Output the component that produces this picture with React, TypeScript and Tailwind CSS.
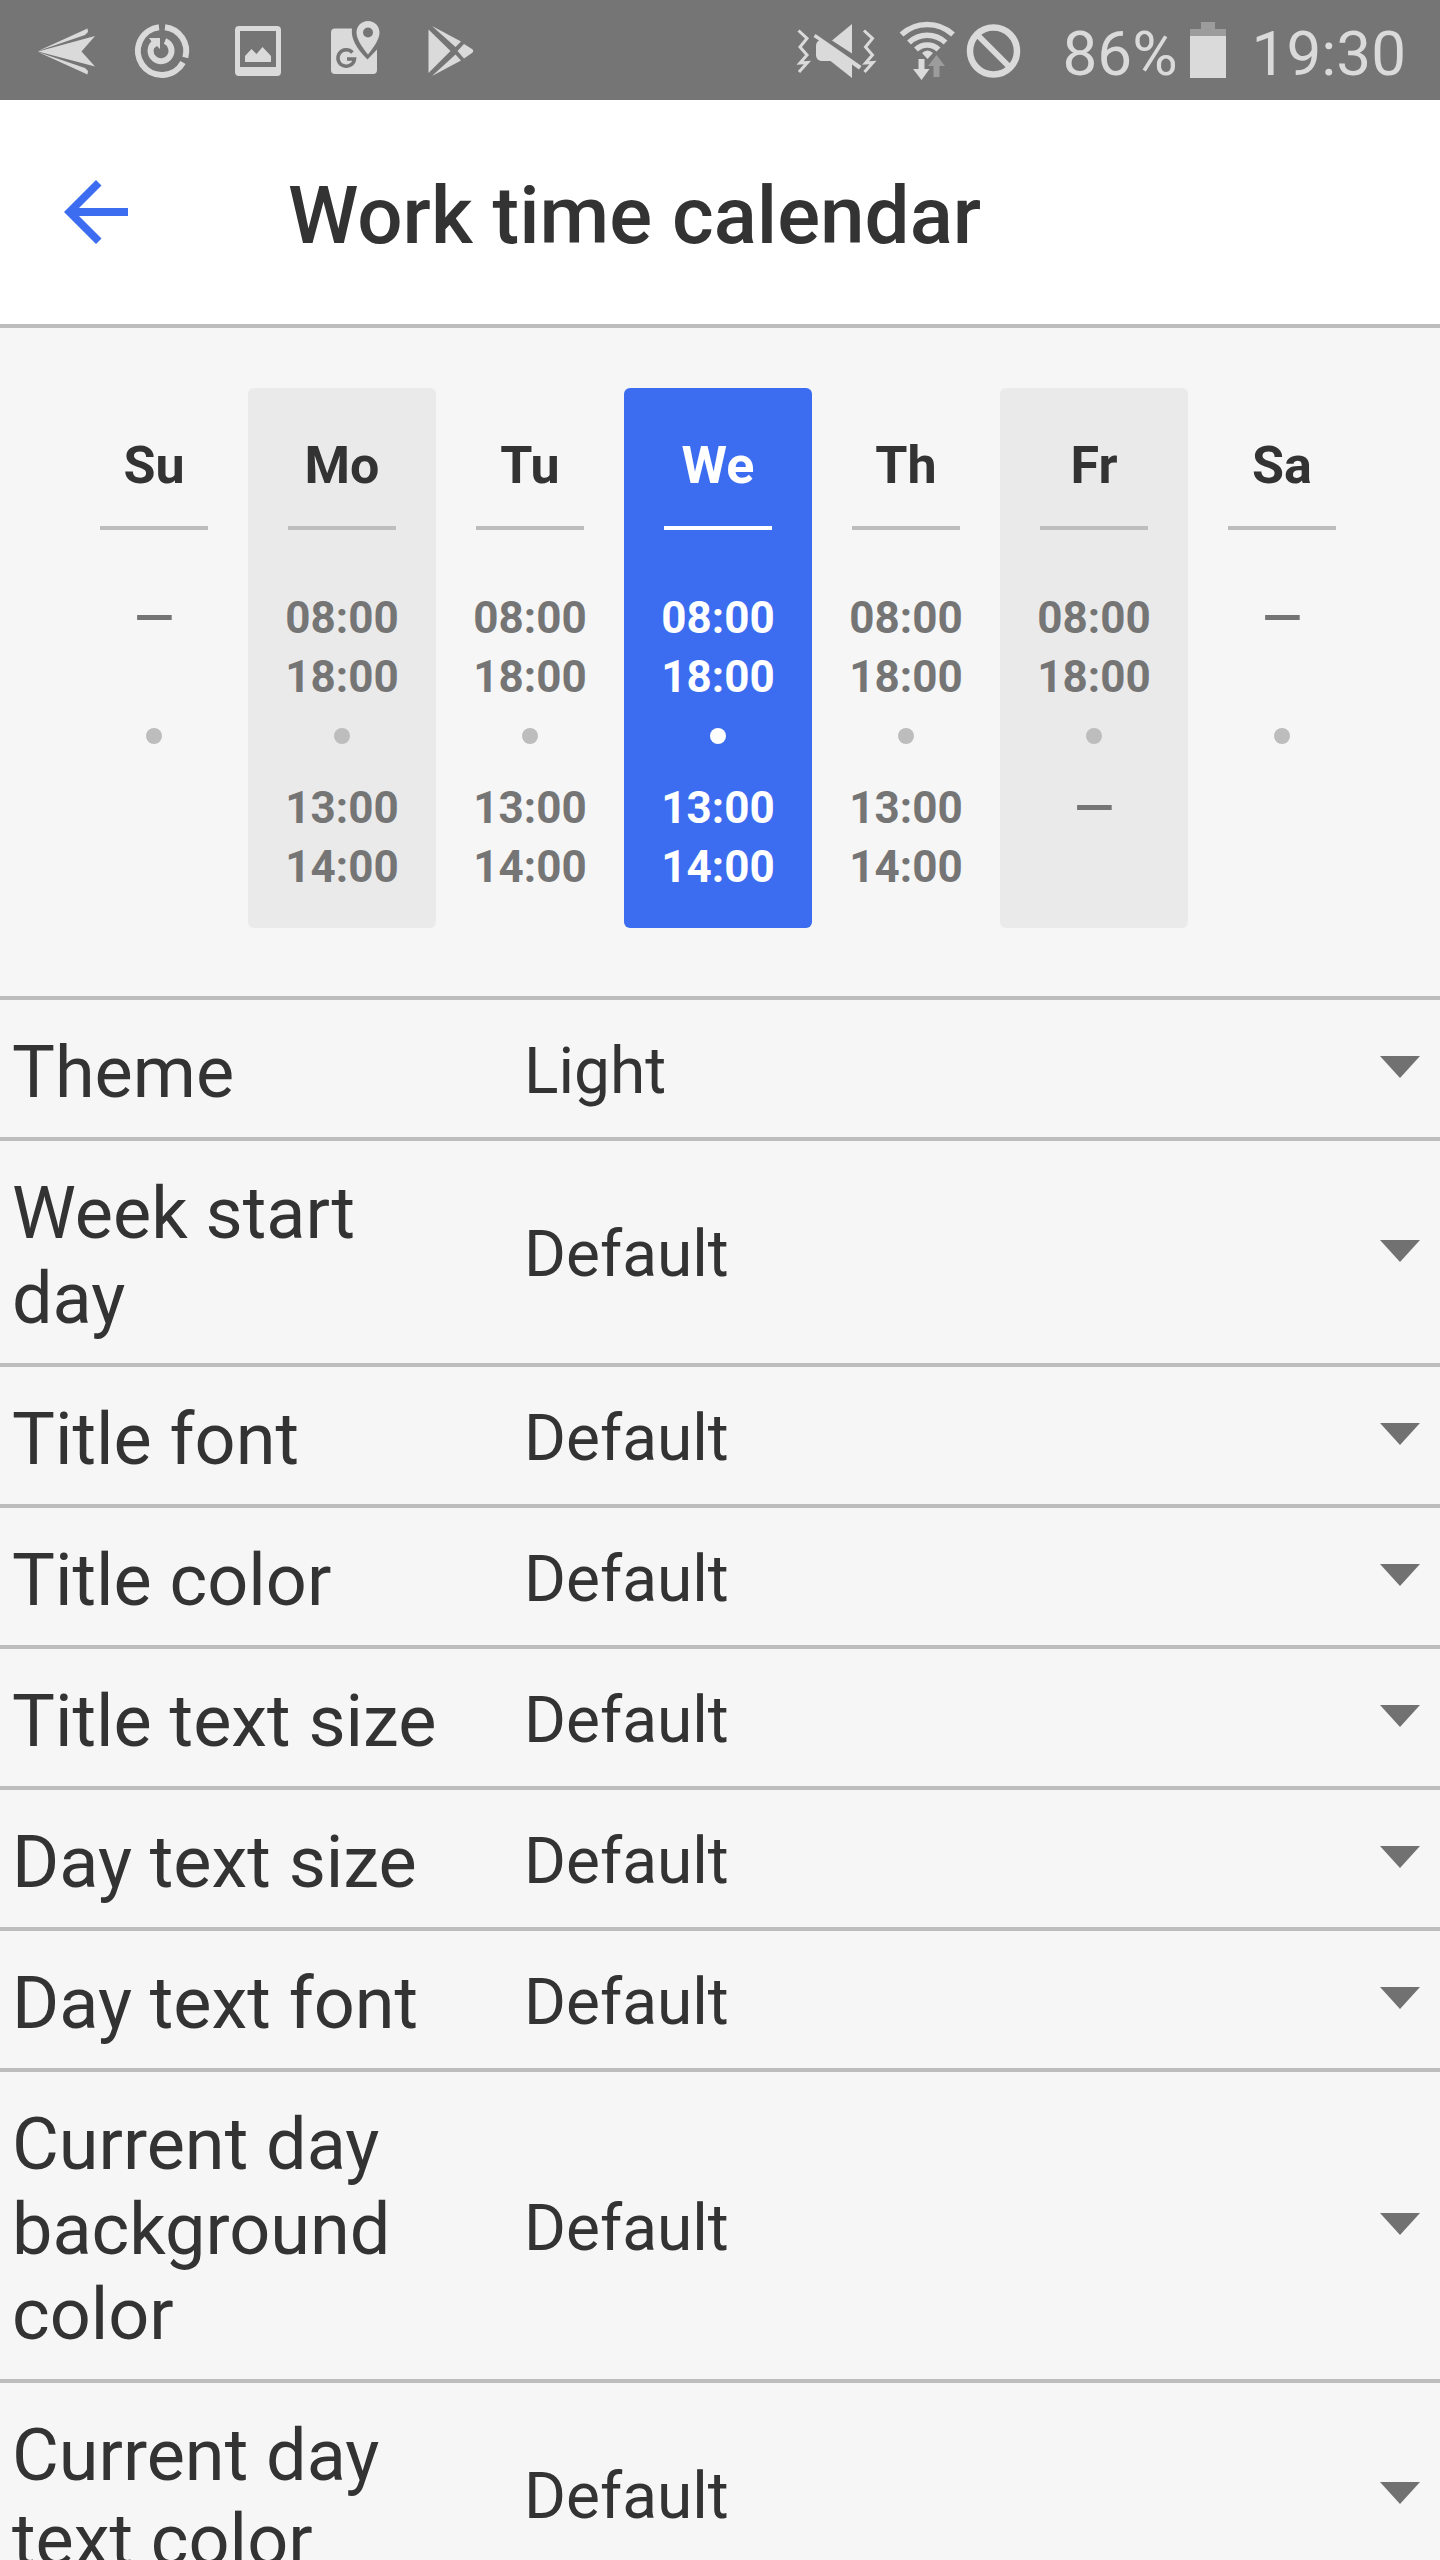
import React from "react";

type Day = { name: string; work: string[]; rest: string[]; tone: "plain" | "shaded" | "current" };

const DASH = ["—"];
const WORK = ["08:00", "18:00"];
const REST = ["13:00", "14:00"];

const days: Day[] = [
  { name: "Su", work: DASH, rest: [], tone: "plain" },
  { name: "Mo", work: WORK, rest: REST, tone: "shaded" },
  { name: "Tu", work: WORK, rest: REST, tone: "plain" },
  { name: "We", work: WORK, rest: REST, tone: "current" },
  { name: "Th", work: WORK, rest: REST, tone: "plain" },
  { name: "Fr", work: WORK, rest: DASH, tone: "shaded" },
  { name: "Sa", work: DASH, rest: [], tone: "plain" },
];

const settings = [
  { id: "theme", label: "Theme", options: ["Light", "Dark"] },
  { id: "week-start", label: "Week start day", options: ["Default", "Sunday", "Monday"] },
  { id: "title-font", label: "Title font", options: ["Default"] },
  { id: "title-color", label: "Title color", options: ["Default"] },
  { id: "title-size", label: "Title text size", options: ["Default"] },
  { id: "day-size", label: "Day text size", options: ["Default"] },
  { id: "day-font", label: "Day text font", options: ["Default"] },
  { id: "current-bg", label: "Current day background color", options: ["Default"] },
  { id: "current-text", label: "Current day text color", options: ["Default"] },
];

const tones = {
  plain: { box: "", name: "text-[#333333]", mark: "bg-[#bdbdbd]", time: "text-[#757575]" },
  shaded: { box: "bg-[#eaeaea]", name: "text-[#333333]", mark: "bg-[#bdbdbd]", time: "text-[#757575]" },
  current: { box: "bg-[#3c6df0]", name: "text-white", mark: "bg-white", time: "text-white" },
};

function NotificationIcons() {
  return (
    <svg width="480" height="100" viewBox="0 0 480 100" fill="#dadada" aria-hidden="true">
      {/* share arrow */}
      <path d="M38 51 87.500 28.500 88 32 85 35Z" />
      <path d="M38 51.500 95 36 81.500 51.500 95 66.500Z" />
      <path d="M38 52 85 68 88 71 87.500 74.500Z" />
      {/* restart */}
      <g fill="none" stroke="#dadada" strokeWidth="6">
        <path d="M159 27.200A24 24 0 1 0 183 62.500" />
        <path d="M165 27.200A24 24 0 0 1 185.300 57.500" />
        <path d="M154.500 42.500A10.500 10.500 0 1 0 165 41" />
      </g>
      <path d="M149 38h11v11l-3-3-4 3-1-7Z" />
      {/* picture */}
      <path fillRule="evenodd" d="M239 26h38a4 4 0 0 1 4 4v42a4 4 0 0 1-4 4h-38a4 4 0 0 1-4-4V30a4 4 0 0 1 4-4Zm1 5v36h36V31Z" />
      <path d="M245 62v-6l6.500-7 5 5 6-7 8.500 9v6Z" />
      {/* map with pin */}
      <path d="M335 28.500h17q-2 14 15.500 31l9.500-10V70a4 4 0 0 1-4 4H335a4 4 0 0 1-4-4V32.500a4 4 0 0 1 4-4Z" />
      <path fillRule="evenodd" d="M368 21c6.500 0 11.500 5 11.500 11.500C379.500 39 374 47 368 54.500 362 47 356.500 39 356.500 32.500 356.500 26 361.500 21 368 21Zm0 6.500a5 5 0 1 0 0 10 5 5 0 0 0 0-10Z" />
      <path d="M352.500 52.500a8.300 8.300 0 1 0 2 6.500H347" fill="none" stroke="#757575" strokeWidth="3.500" />
      {/* play store */}
      <path d="M428.500 29.500 450.500 51 428.500 73Z" />
      <path d="M432 26 461 41.500 455.500 47Z" />
      <path d="M464 44 472 49q2.500 2 0 4L464 58.500 457.500 51Z" />
      <path d="M432 76 461 60.500 455.500 54.500Z" />
    </svg>
  );
}

function SystemIcons() {
  return (
    <svg width="230" height="100" viewBox="792 0 230 100" fill="#dadada" aria-hidden="true">
      {/* vibrate, muted */}
      <g fill="none" stroke="#dadada" strokeWidth="3">
        <path d="M798.500 30.500 807 38.500l-7 8.500 7 8-7 8 7.500-.500-8.500 9.500" />
        <path d="M864 30.500 872.500 38.500l-7 8.500 7 8-7 8 7.500-.500-8.500 9.500" />
      </g>
      <path d="M852 24v29.500L832 40.500Z" />
      <path d="M815.500 34 861.500 66 859 69.500 852 64.500V78L830.500 61H821q-5-1-5-6V46q0-4 3-5.500L813.500 37Z" />
      {/* wifi with traffic arrows */}
      <g fill="none" stroke="#dadada" strokeWidth="5.500">
        <path d="M901.500 34.500A38 38 0 0 1 953 34.500" />
        <path d="M909 42.500A26.500 26.500 0 0 1 945.500 42.500" />
        <path d="M916 49.500A16 16 0 0 1 938.500 49.500" />
      </g>
      <path d="M922 53q5.500-5 11 0l-5.500 6Z" />
      <path d="M918.500 59h6v10h5L921.500 80 913 69h5.500Z" />
      <path d="M936.500 55 945 66h-5.500v11h-6V66H928Z" fill="#9c9c9c" />
      {/* blocked */}
      <g fill="none" stroke="#dadada">
        <circle cx="993.500" cy="51" r="23.500" strokeWidth="6.500" />
        <path d="M977 34.500 1010 67.500" strokeWidth="6" />
      </g>
    </svg>
  );
}

function Battery() {
  return (
    <svg width="36" height="56" viewBox="0 0 36 56" aria-hidden="true">
      <path d="M11 0h14v7h11v7H0V7h11Z" fill="#9c9c9c" />
      <path d="M0 14h36v42H0Z" fill="#dadada" />
    </svg>
  );
}

function BackArrow() {
  return (
    <svg width="64" height="64" viewBox="0 0 64 64" fill="#3c6df0" aria-hidden="true">
      <path d="M0 32 32 0 37.500 5.500 15 28H64V36H15L37.500 58.500 32 64Z" />
    </svg>
  );
}

function Times({ values }: { values: string[] }) {
  return (
    <>
      {values.map((v) => (
        <p key={v} className={v === "—" ? "text-[52px] leading-[59px] font-medium" : "text-[44px] leading-[59px]"}>{v}</p>
      ))}
    </>
  );
}

export default function App() {
  return (
    <div className="min-h-screen w-full bg-[#f6f6f6] font-[Roboto,sans-serif] text-[#333333]">
      <div className="flex h-[100px] items-center justify-between bg-[#757575] pr-[34px] text-[62px] leading-none text-[#dadada]">
        <NotificationIcons />
        <div className="flex items-center">
          <SystemIcons />
          <span className="mr-3 ml-10 pt-2">86%</span>
          <Battery />
          <span className="ml-[26px] pt-2">19:30</span>
        </div>
      </div>
      <header className="flex h-[228px] items-center border-b-4 border-[#bdbdbd] bg-white pl-16">
        <button type="button" aria-label="Back" className="mr-40"><BackArrow /></button>
        <h1 className="pt-2 text-[80px] leading-none font-medium">Work time calendar</h1>
      </header>
      <section aria-label="Week preview" className="grid grid-cols-7 pt-[60px] pr-16 pb-[68px] pl-[60px]">
        {days.map((d) => {
          const t = tones[d.tone];
          return (
            <div key={d.name} className={`flex h-[540px] flex-col items-center rounded-md pt-12 font-bold ${t.box}`}>
              <h2 className={`text-[52px] leading-[60px] ${t.name}`}>{d.name}</h2>
              <div className={`mt-[30px] h-1 w-[108px] ${t.mark}`} />
              <div className={`mt-[59px] h-[120px] ${t.time}`}><Times values={d.work} /></div>
              <div className={`mt-[19px] size-4 rounded-full ${t.mark}`} />
              <div className={`mt-[35px] ${t.time}`}><Times values={d.rest} /></div>
            </div>
          );
        })}
      </section>
      <form>
        {settings.map((s) => (
          <div key={s.id} className="flex border-t-4 border-[#bdbdbd] pl-3">
            <label htmlFor={s.id} className="w-[440px] shrink-0 pt-[30px] pb-[22px] text-[72px] leading-[85px]">{s.label}</label>
            <div className="grid flex-1 items-center pl-[72px]">
              <select id={s.id} className="col-start-1 row-start-1 w-full appearance-none self-stretch bg-transparent pt-[6px] text-[64px]">
                {s.options.map((o) => <option key={o}>{o}</option>)}
              </select>
              <svg className="pointer-events-none col-start-1 row-start-1 mr-5 justify-self-end" width="40" height="25" viewBox="0 0 40 25" fill="#717171" aria-hidden="true">
                <path d="M0 0H40L20 22Z" />
              </svg>
            </div>
          </div>
        ))}
      </form>
    </div>
  );
}
